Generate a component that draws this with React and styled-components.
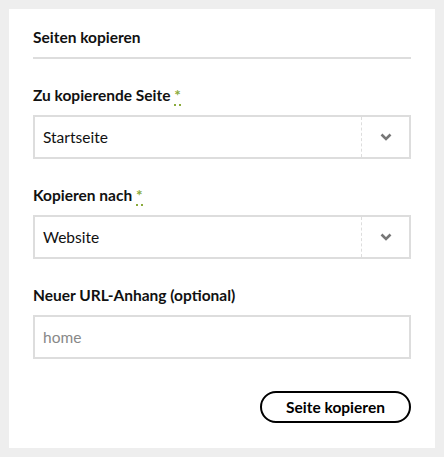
import React from "react";
import styled, { createGlobalStyle } from "styled-components";

const GlobalStyle = createGlobalStyle`
  body {
    margin: 0;
    background: #eeeeee;
    font-family: Lato, "Liberation Sans", sans-serif;
    color: #111;
  }
`;

function Chevron() {
  return (
    <svg width="12" height="8" viewBox="0 0 12 8">
      <polyline
        points="1.5,1.5 6,6 10.5,1.5"
        fill="none"
        stroke="#777"
        strokeWidth="2.6"
      />
    </svg>
  );
}

function Required() {
  return <Star title="Pflichtfeld">*</Star>;
}

function SelectField({ label, value, required }) {
  return (
    <Field>
      <Label>
        {label} {required && <Required />}
      </Label>
      <SelectBox>
        <SelectValue>{value}</SelectValue>
        <Arrow>
          <Chevron />
        </Arrow>
      </SelectBox>
    </Field>
  );
}

export default function App() {
  return (
    <Page>
      <GlobalStyle />
      <Panel>
        <Title>Seiten kopieren</Title>
        <SelectField label="Zu kopierende Seite" value="Startseite" required />
        <SelectField label="Kopieren nach" value="Website" required />
        <Field>
          <Label>Neuer URL-Anhang (optional)</Label>
          <TextInput placeholder="home" />
        </Field>
        <Actions>
          <Button>Seite kopieren</Button>
        </Actions>
      </Panel>
    </Page>
  );
}

const Page = styled.div`
  padding: 9px;
`;

const Panel = styled.div`
  background: #fff;
  width: 426px;
  box-sizing: border-box;
  padding: 18px 24px 25px;
`;

const Title = styled.h1`
  margin: 0;
  font-size: 15.5px;
  line-height: 20px;
  font-weight: 700;
  padding-bottom: 10px;
  border-bottom: 2px solid #dddddd;
`;

const Field = styled.div`
  margin-top: 26px;
`;

const Label = styled.label`
  display: block;
  font-size: 15.5px;
  line-height: 20px;
  font-weight: 700;
  margin-bottom: 10px;
`;

const Star = styled.abbr`
  color: #8aab3c;
  text-decoration: none;
  border-bottom: 2px dotted #8aab3c;
  cursor: help;
`;

const SelectBox = styled.div`
  display: flex;
  height: 44px;
  box-sizing: border-box;
  border: 2px solid #dddddd;
  background: #fff;
`;

const SelectValue = styled.div`
  flex: 1;
  display: flex;
  align-items: center;
  padding-left: 8px;
  font-size: 15.5px;
`;

const Arrow = styled.div`
  width: 47px;
  display: flex;
  align-items: center;
  justify-content: center;
  border-left: 1px dashed #dddddd;
`;

const TextInput = styled.input`
  display: block;
  width: 100%;
  height: 44px;
  box-sizing: border-box;
  border: 2px solid #dddddd;
  padding: 0 8px;
  font-family: inherit;
  font-size: 15.5px;
  outline: none;

  &::placeholder {
    color: #888;
  }
`;

const Actions = styled.div`
  display: flex;
  justify-content: flex-end;
  margin-top: 32px;
`;

const Button = styled.button`
  width: 151px;
  height: 32px;
  border: 2px solid #000;
  border-radius: 16px;
  background: #fff;
  font-family: inherit;
  font-size: 15.5px;
  font-weight: 700;
  color: #000;
  cursor: pointer;
`;
